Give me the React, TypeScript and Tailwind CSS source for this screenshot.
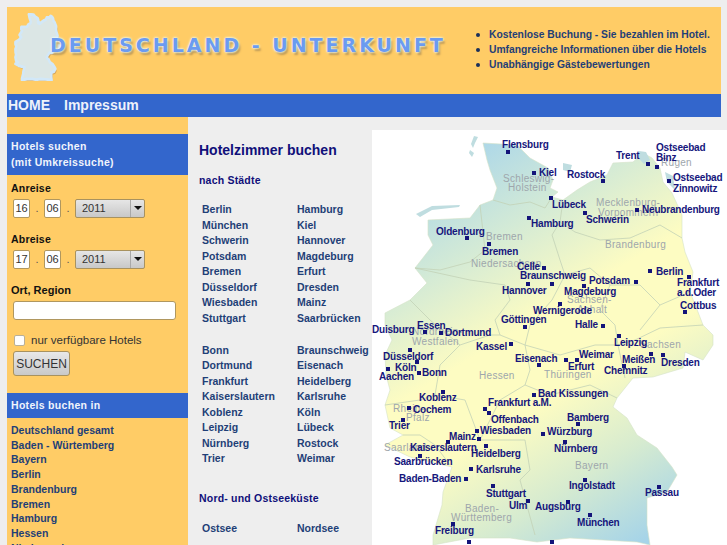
import React from "react";

const font = { fontFamily: '"Liberation Sans", Arial, sans-serif' };

const pins: [number, number][] = [
  [508,152],[648,164],[657,167],[534,173],[603,181],[669,181],[551,198],[637,210],[585,213],[529,218],[467,238],[489,244],
  [544,268],[552,284],[528,284],[636,282],[650,271],[689,277],[584,286],[560,304],[685,312],[525,327],[603,326],[425,332],
  [441,333],[619,336],[511,344],[410,350],[539,365],[577,360],[566,360],[651,354],[663,355],[624,366],[417,362],[419,373],
  [388,369],[534,395],[443,392],[485,409],[409,408],[489,413],[578,424],[403,420],[477,431],[479,439],[543,434],[565,442],
  [448,442],[486,446],[420,456],[471,469],[466,479],[585,480],[659,487],[493,486],[528,501],[568,502],[590,515],[453,524],
  [469,542],[552,542],
];

const cities: [string, number, number][] = [
  ["Flensburg",502,145],["Trent",616,156],["Ostseebad",656,148],["Binz",656,158],["Kiel",539,173],["Rostock",567,175],
  ["Ostseebad",673,178],["Zinnowitz",673,189],["Lübeck",552,205],["Neubrandenburg",642,210],["Schwerin",586,220],
  ["Hamburg",531,224],["Oldenburg",436,232],["Bremen",482,252],["Celle",517,267],["Braunschweig",520,276],["Hannover",502,291],
  ["Potsdam",589,281],["Berlin",656,272],["Frankfurt",677,283],["a.d.Oder",677,293],["Magdeburg",564,292],["Wernigerode",533,311],
  ["Cottbus",680,306],["Göttingen",501,320],["Halle",575,325],["Essen",417,326],["Duisburg",372,330],["Dortmund",445,333],
  ["Leipzig",614,343],["Kassel",476,347],["Düsseldorf",383,357],["Eisenach",515,359],["Weimar",579,355],["Erfurt",568,367],
  ["Meißen",622,360],["Dresden",661,363],["Chemnitz",604,371],["Köln",395,368],["Bonn",422,373],["Aachen",379,377],
  ["Bad Kissungen",538,394],["Koblenz",419,398],["Frankfurt a.M.",488,403],["Cochem",413,410],["Offenbach",491,420],
  ["Bamberg",567,418],["Trier",389,426],["Wiesbaden",480,431],["Mainz",449,437],["Würzburg",547,432],["Nürnberg",554,449],
  ["Kaiserslautern",410,448],["Heidelberg",471,454],["Saarbrücken",394,462],["Karlsruhe",476,470],["Baden-Baden",399,479],
  ["Ingolstadt",569,486],["Passau",645,493],["Stuttgart",486,494],["Ulm",509,506],["Augsburg",535,507],["München",577,523],
  ["Freiburg",435,531],
];

const regions: [string, number, number][] = [
  ["Rügen",661,163],["Schleswig-",503,179],["Holstein",508,188],["Mecklenburg-",596,203],["Vorpommern",598,213],["Bremen",486,237],
  ["Brandenburg",605,245],["Niedersachsen",471,264],["Sachsen-",567,300],["Anhalt",577,310],["Nordrhein-",412,332],["Westfalen",412,342],
  ["Sachsen",640,345],["Hessen",479,376],["Thüringen",544,375],["Rhein-",393,409],["Pfalz",406,418],["Saarland",384,448],
  ["Bayern",575,466],["Baden-",465,509],["Württemberg",451,518],
];

const outline =
  "M483 143 L517 145 L530 158 L548 168 L553 180 L550 188 L558 192 L552 197 L563 200 L577 190 L590 182 L607 175 L613 163 L633 162 L643 153 L652 158 L660 168 L663 182 L672 193 L682 215 L682 238 L685 252 L693 272 L690 292 L698 312 L703 325 L713 335 L713 345 L703 360 L685 352 L683 368 L653 377 L633 378 L617 398 L613 407 L627 418 L637 435 L657 448 L672 467 L677 475 L667 492 L647 498 L647 525 L650 545 L637 542 L603 540 L570 538 L537 542 L510 538 L470 538 L433 545 L433 535 L442 505 L443 492 L452 467 L410 457 L385 445 L403 435 L390 428 L385 405 L390 390 L386 375 L385 355 L392 340 L385 325 L385 313 L410 300 L427 283 L415 268 L433 245 L428 235 L428 220 L470 218 L480 205 L493 200 L497 188 L490 170 L487 160 Z";

const borders = [
  "M493 200 L510 205 L530 202 L545 208 L552 197",
  "M563 200 L560 222 L575 232 L600 240 L630 238 L660 225 L682 238",
  "M480 205 L485 250 L470 262 L440 270 L415 268",
  "M560 222 L552 235 L560 260 L565 275 L590 268 L610 285 L600 310 L615 325 L618 345",
  "M610 285 L640 285 L660 305 L690 292",
  "M640 330 L660 305",
  "M618 345 L635 340 L660 328 L703 325",
  "M415 268 L470 280 L505 285 L510 300 L495 320 L500 335 L525 345",
  "M565 275 L552 300 L530 325 L525 345 L530 370 L525 385",
  "M525 345 L560 355 L595 345 L618 345 L625 378",
  "M525 385 L550 395 L590 385 L617 398",
  "M460 345 L440 365 L435 395 L465 400 L480 440 L525 440 L530 470 L520 480 L535 535",
  "M385 405 L420 400 L435 395",
  "M403 435 L420 435 L435 445 L450 465",
  "M525 385 L500 400 L480 440",
  "M410 300 L430 320 L460 345 L490 335 L500 335",
];

const islands = [
  "M474 136 L478 137 L475 143 L473 148 L471 144 Z",
  "M470 150 L474 153 L472 157 L469 153 Z",
  "M416 214 L432 206 L460 205 L459 207 L432 210 L420 217 Z",
  "M639 151 L646 152 L650 160 L644 164 L638 158 Z",
  "M665 172 L673 176 L675 190 L667 182 Z",
  "M563 163 L572 165 L570 172 L563 170 Z",
];

function Pin({ x, y }: { x: number; y: number }) {
  return <span className="absolute w-[4px] h-[4px] bg-[#14147a]" style={{ left: x - 374, top: y - 132 }} />;
}

function MapPanel() {
  return (
    <div className="relative w-[355px] h-[415px] bg-white overflow-hidden mt-[13px] shrink-0">
      <svg className="absolute inset-0" width="355" height="415" viewBox="372 130 355 415">
        <defs>
          <linearGradient id="germany" gradientUnits="userSpaceOnUse" x1="440" y1="170" x2="660" y2="530">
            <stop offset="0" stopColor="#aed8e8" />
            <stop offset="0.2" stopColor="#d3ead6" />
            <stop offset="0.42" stopColor="#fdfcc2" />
            <stop offset="0.6" stopColor="#fdfcc2" />
            <stop offset="0.8" stopColor="#d6ebd0" />
            <stop offset="1" stopColor="#a6d4e8" />
          </linearGradient>
        </defs>
        <path d={outline} fill="url(#germany)" stroke="#d5e3c8" strokeWidth="0.6" />
        {islands.map((d) => (
          <path key={d} d={d} fill="#bfdde0" />
        ))}
        {borders.map((d) => (
          <path key={d} d={d} fill="none" stroke="#c3d2b6" strokeWidth="0.8" />
        ))}
      </svg>
      {regions.map(([t, x, y]) => (
        <span
          key={t}
          className="absolute text-[10px] leading-[10px] tracking-[0.3px] text-[#9ea6ac] whitespace-nowrap"
          style={{ left: x - 372, top: y - 135 }}
        >
          {t}
        </span>
      ))}
      {pins.map(([x, y]) => (
        <Pin key={`${x}-${y}`} x={x} y={y} />
      ))}
      {cities.map(([t, x, y]) => (
        <span
          key={`${t}${x}`}
          className="absolute text-[10px] leading-[10px] font-bold tracking-[-0.2px] text-[#16167c] whitespace-nowrap"
          style={{ left: x - 372, top: y - 135 }}
        >
          {t}
        </span>
      ))}
    </div>
  );
}

function DateRow({ day, month, top }: { day: string; month: string; top: string }) {
  return (
    <div className={`flex items-center h-[20px] ml-[6px] ${top}`}>
      <div className="w-[17px] h-[19px] mt-[1px] bg-white border border-[#b0975f] rounded-[2px] text-[11px] text-[#333] flex items-center justify-center">{day}</div>
      <span className="w-[14px] text-center text-[11px] text-[#555]">.</span>
      <div className="w-[17px] h-[19px] mt-[1px] bg-white border border-[#b0975f] rounded-[2px] text-[11px] text-[#333] flex items-center justify-center">{month}</div>
      <span className="w-[14px] text-center text-[11px] text-[#555]">.</span>
      <div className="w-[70px] h-[19px] border border-[#a8925f] rounded-[2px] flex bg-gradient-to-b from-[#e6e6e6] to-[#c8c8c8] text-[11px] text-[#333]">
        <div className="flex-1 pl-[6px] flex items-center">2011</div>
        <div className="w-[14px] border-l border-[#a8a8a8] flex items-center justify-center">
          <span className="w-0 h-0 border-l-[4px] border-r-[4px] border-t-[4px] border-l-transparent border-r-transparent border-t-[#111]" />
        </div>
      </div>
    </div>
  );
}

const staedte1 = [
  ["Berlin","Hamburg"],["München","Kiel"],["Schwerin","Hannover"],["Potsdam","Magdeburg"],
  ["Bremen","Erfurt"],["Düsseldorf","Dresden"],["Wiesbaden","Mainz"],["Stuttgart","Saarbrücken"],
];
const staedte2 = [
  ["Bonn","Braunschweig"],["Dortmund","Eisenach"],["Frankfurt","Heidelberg"],["Kaiserslautern","Karlsruhe"],
  ["Koblenz","Köln"],["Leipzig","Lübeck"],["Nürnberg","Rostock"],["Trier","Weimar"],
];

function CityGrid({ rows }: { rows: string[][] }) {
  return (
    <div className="grid grid-cols-[95px_1fr] pl-[3px] text-[10.5px] leading-[15.57px] font-bold text-[#1f3f77]">
      {rows.flat().map((c) => (
        <div key={c} className="whitespace-nowrap">{c}</div>
      ))}
    </div>
  );
}

export default function App() {
  const states = ["Deutschland gesamt","Baden - Würtemberg","Bayern","Berlin","Brandenburg","Bremen","Hamburg","Hessen","Niedersachsen"];
  return (
    <div className="w-[727px] h-[545px] overflow-hidden bg-[#eeeeee] pl-[7px] pt-[7px]" style={font}>
      <header className="w-[714px] h-[87px] bg-[#ffcc66] flex items-start">
        <div className="relative w-[469px] h-[87px] shrink-0">
          <svg className="absolute left-[7px] top-[6px]" width="48" height="68" viewBox="375 135 350 415" preserveAspectRatio="none">
            <path d={outline} fill="#c4975a" opacity="0.7" transform="translate(10 14)" />
            <path d={outline} fill="#dbe6e5" stroke="#d2e8f8" strokeWidth="18" strokeLinejoin="round" />
          </svg>
          <div
            className="absolute left-[43px] top-[27px] text-[19px] leading-[22px] font-bold tracking-[3px] whitespace-nowrap text-[#6b9bf0] [text-shadow:0_0_2px_#fff,0_0_3px_#dff,2px_3px_2px_#bf9a55]"
            style={{ fontFamily: '"DejaVu Sans", sans-serif' }}
          >
            DEUTSCHLAND - UNTERKUNFT
          </div>
        </div>
        <ul className="pt-[20px] text-[10.3px] leading-[15px] font-bold text-[#1f3f77]">
          {["Kostenlose Buchung - Sie bezahlen im Hotel.","Umfangreiche Informationen über die Hotels","Unabhängige Gästebewertungen"].map((t) => (
            <li key={t} className="flex items-center whitespace-nowrap">
              <span className="w-[4px] h-[4px] rounded-full bg-[#1a2f5a] mr-[9px]" />
              {t}
            </li>
          ))}
        </ul>
      </header>
      <nav className="w-[714px] h-[23px] bg-[#3366cc] flex items-center pl-[1px] gap-[14px] text-[14px] font-bold text-[#eef2fb]">
        <span>HOME</span>
        <span>Impressum</span>
      </nav>
      <div className="flex items-start h-[428px]">
        <aside className="w-[181px] h-[428px] bg-[#ffcc66] pt-[17px] shrink-0 overflow-hidden">
          <div className="h-[41px] bg-[#3366cc] pl-[4px] pt-[4px] text-[10.5px] leading-[16px] font-bold tracking-[0.3px] text-[#f0f4fc]">
            <div>Hotels suchen</div>
            <div>(mit Umkreissuche)</div>
          </div>
          <div className="pl-[4px] pt-[6px] text-[10.5px] leading-[14px] font-bold text-[#111] tracking-[0.2px]">Anreise</div>
          <DateRow day="16" month="06" top="mt-[3px]" />
          <div className="pl-[4px] pt-[14px] text-[10.5px] leading-[14px] font-bold text-[#111] tracking-[0.2px]">Abreise</div>
          <DateRow day="17" month="06" top="mt-[3px]" />
          <div className="pl-[4px] pt-[14px] text-[11px] leading-[14px] font-bold text-[#111]">Ort, Region</div>
          <div className="ml-[6px] mt-[4px] w-[163px] h-[19px] bg-white border border-[#b0975f] rounded-[3px]" />
          <div className="flex items-center ml-[7px] mt-[14px] h-[13px]">
            <div className="w-[11px] h-[11px] bg-white border border-[#b8b09a] rounded-[2px]" />
            <span className="ml-[6px] text-[11.5px] text-[#333]">nur verfügbare Hotels</span>
          </div>
          <div className="ml-[6px] mt-[4px] w-[57px] h-[25px] border border-[#a8925f] rounded-[3px] bg-gradient-to-b from-[#e8e8e8] to-[#c9c9c9] text-[12px] text-[#333] flex items-center justify-center">SUCHEN</div>
          <div className="mt-[17px] h-[25px] bg-[#3366cc] pl-[4px] flex items-center text-[10.5px] font-bold tracking-[0.3px] text-[#f0f4fc]">Hotels buchen in</div>
          <div className="pl-[4px] pt-[5px] text-[10.5px] leading-[14.7px] font-bold text-[#1f3f77]">
            {states.map((s) => (
              <div key={s} className="whitespace-nowrap">{s}</div>
            ))}
          </div>
        </aside>
        <main className="w-[184px] h-[428px] pl-[11px] pt-[24px] shrink-0 overflow-hidden">
          <h1 className="text-[14px] leading-[18px] font-bold text-[#10107a]">Hotelzimmer buchen</h1>
          <h2 className="mt-[14px] text-[10.5px] leading-[14px] font-bold tracking-[0.2px] text-[#10107a]">nach Städte</h2>
          <div className="mt-[15px]"><CityGrid rows={staedte1} /></div>
          <div className="mt-[16px]"><CityGrid rows={staedte2} /></div>
          <h2 className="mt-[24px] text-[10.5px] leading-[14px] font-bold tracking-[0.2px] text-[#10107a]">Nord- und Ostseeküste</h2>
          <div className="mt-[16px]"><CityGrid rows={[["Ostsee","Nordsee"]]} /></div>
        </main>
        <MapPanel />
      </div>
    </div>
  );
}
